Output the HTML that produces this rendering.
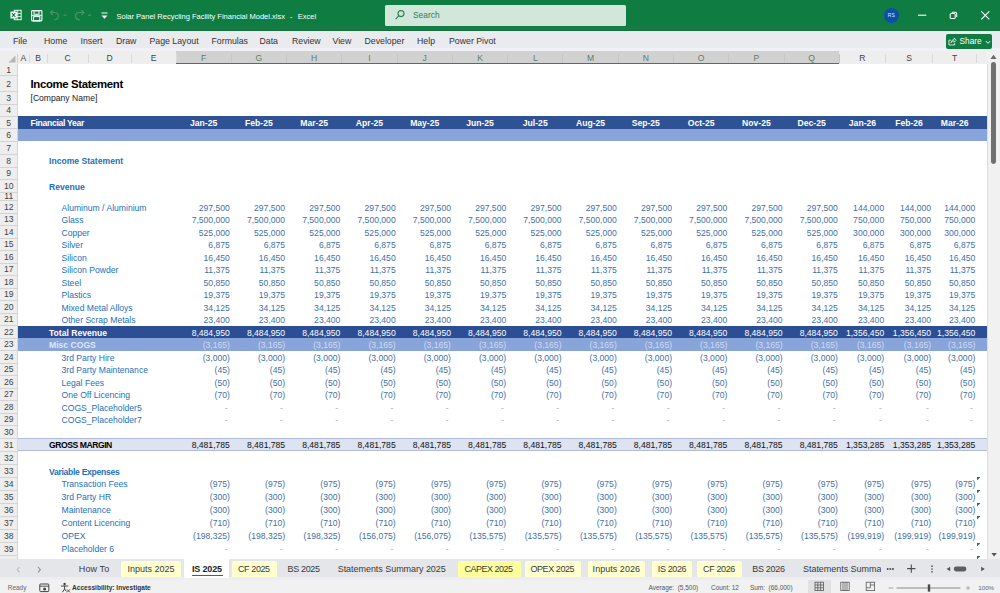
<!DOCTYPE html>
<html lang="en"><head><meta charset="utf-8"><title>Solar Panel Recycling Facility Financial Model.xlsx - Excel</title>
<style>
html,body{margin:0;padding:0;}
body{width:1000px;height:593px;overflow:hidden;position:relative;background:#fff;font-family:"Liberation Sans",sans-serif;}
.a{position:absolute;white-space:nowrap;}
.t{position:absolute;white-space:nowrap;line-height:1;}
#titlebar{left:0;top:0;width:1000px;height:31px;background:linear-gradient(#0f7d42 0,#0f7d42 26px,#187a45 27px,#187a45 29.8px,#0f6a39 31px);}
#ribbon{left:0;top:31px;width:1000px;height:20.2px;background:linear-gradient(#e9ebef 0,#e9ebef 16.6px,#f1f0f5 17.2px,#f1f0f5 20.2px);}
.menu{top:37.3px;font-size:8.75px;color:#333;}
#colhdr{left:0;top:51.1px;width:1000px;height:12.7px;background:#eeeeee;}
.ch{top:53.6px;font-size:8.6px;color:#444;text-align:center;}
.rh{left:0;width:17.5px;font-size:8.6px;color:#444;text-align:center;}
.cell{font-size:8.6px;}
.num{text-align:right;}
.lab{color:#1f6fb8;}
.n{color:#3f70a8;}
.b{font-weight:bold;}
.tab{top:565px;font-size:9.15px;color:#3a3a3a;text-align:center;}
.ytab{top:560.5px;height:17px;border-radius:2px;}
.st{top:584.8px;font-size:6.45px;color:#555;}
</style></head><body>

<div class="a" id="titlebar"></div>
<svg class="a" style="left:9.6px;top:9px" width="12" height="12" viewBox="0 0 14 14">
<rect x="5" y="1.5" width="8" height="11" fill="none" stroke="#fff" stroke-width="1.1"/>
<line x1="9" y1="1.5" x2="9" y2="12.5" stroke="#fff" stroke-width="0.9"/>
<line x1="5" y1="5.2" x2="13" y2="5.2" stroke="#fff" stroke-width="0.9"/>
<line x1="5" y1="8.8" x2="13" y2="8.8" stroke="#fff" stroke-width="0.9"/>
<rect x="0.5" y="3" width="7.5" height="8" fill="#fff"/>
<path d="M2.3 4.8 L6.2 9.3 M6.2 4.8 L2.3 9.3" stroke="#117c42" stroke-width="1.3" fill="none"/>
</svg>
<svg class="a" style="left:31px;top:9.5px" width="12" height="12" viewBox="0 0 12 12">
<rect x="0.6" y="0.6" width="10.3" height="10.3" rx="0.8" fill="none" stroke="#fff" stroke-width="1.1"/>
<rect x="3" y="0.8" width="5" height="3.4" fill="none" stroke="#fff" stroke-width="1"/>
<rect x="2.6" y="6.6" width="6.2" height="4.3" fill="none" stroke="#fff" stroke-width="1"/>
<line x1="0.6" y1="5.4" x2="10.9" y2="5.4" stroke="#fff" stroke-width="0.9"/>
</svg>
<svg class="a" style="left:49px;top:9px" width="54" height="13" viewBox="0 0 54 13">
<g fill="none" stroke="#479669" stroke-width="1.2">
<path d="M1.5 3.5 L5.5 3.5 Q9.5 3.5 9.5 7 Q9.5 10.5 5 11"/>
<path d="M3.8 1.2 L1.3 3.6 L3.8 6"/>
<path d="M14.5 6.2 L17.5 6.2"/>
<path d="M34.5 3.5 L30.5 3.5 Q26.5 3.5 26.5 7 Q26.5 10.5 31 11"/>
<path d="M32.3 1.2 L34.8 3.6 L32.3 6"/>
<path d="M39 6.2 L42 6.2"/>
</g></svg>
<svg class="a" style="left:100px;top:12px" width="9" height="8" viewBox="0 0 9 8">
<line x1="1.5" y1="1" x2="7.5" y2="1" stroke="#fff" stroke-width="1"/>
<path d="M1.5 3.5 L7.5 3.5 L4.5 6.8 Z" fill="#fff"/></svg>
<div class="t" style="left:116.5px;top:12.6px;font-size:7.5px;color:#fff;">Solar Panel Recycling Facility Financial Model.xlsx&nbsp; <span style="margin:0 1px;">-</span> &nbsp;Excel</div>
<div class="a" style="left:385.2px;top:5.2px;width:240.6px;height:20.5px;background:#d1e7da;border-radius:1.5px;"></div>
<svg class="a" style="left:394px;top:9.3px" width="12" height="12" viewBox="0 0 12 12">
<circle cx="7" cy="4.6" r="3" fill="none" stroke="#2f7d55" stroke-width="1.1"/>
<line x1="4.8" y1="6.9" x2="1.6" y2="10.2" stroke="#2f7d55" stroke-width="1.2"/></svg>
<div class="t" style="left:413px;top:10.9px;font-size:8.4px;color:#357a55;">Search</div>
<div class="a" style="left:883.8px;top:7.9px;width:15px;height:15px;border-radius:50%;background:#0b4fa6;"></div>
<div class="t" style="left:883.8px;top:13px;width:15px;text-align:center;font-size:5px;color:#dfe8f5;">RS</div>
<svg class="a" style="left:915px;top:8px" width="80" height="14" viewBox="0 0 80 14">
<line x1="3" y1="7.2" x2="11.3" y2="7.2" stroke="#fff" stroke-width="1.1"/>
<rect x="35.2" y="5.5" width="5" height="5" rx="1.1" fill="none" stroke="#fff" stroke-width="1.05"/>
<path d="M36.7 4.2 L40.3 4.2 Q41.7 4.2 41.7 5.6 L41.7 9.1" fill="none" stroke="#fff" stroke-width="1.05"/>
<path d="M66.3 3.4 L74.3 11.4 M74.3 3.4 L66.3 11.4" stroke="#fff" stroke-width="1.05"/>
</svg>
<div class="a" id="ribbon"></div>
<div class="t menu" style="left:13px;">File</div>
<div class="t menu" style="left:44px;">Home</div>
<div class="t menu" style="left:80.5px;">Insert</div>
<div class="t menu" style="left:116px;">Draw</div>
<div class="t menu" style="left:149.5px;">Page Layout</div>
<div class="t menu" style="left:211.5px;">Formulas</div>
<div class="t menu" style="left:259.5px;">Data</div>
<div class="t menu" style="left:292px;">Review</div>
<div class="t menu" style="left:332.5px;">View</div>
<div class="t menu" style="left:364.5px;">Developer</div>
<div class="t menu" style="left:417px;">Help</div>
<div class="t menu" style="left:449px;">Power Pivot</div>
<div class="a" style="left:946px;top:33.8px;width:46px;height:15px;background:#117c42;border-radius:2px;"></div>
<svg class="a" style="left:948.3px;top:37px" width="8.8" height="8.8" viewBox="0 0 10 10">
<path d="M3.2 3.6 L1 3.6 L1 9 L7.6 9 L7.6 6.8" fill="none" stroke="#fff" stroke-width="0.9"/>
<path d="M3.4 6.6 Q3.8 3 7 2.8 L7 1 L9.4 3.6 L7 6 L7 4.4 Q4.8 4.4 3.4 6.6 Z" fill="none" stroke="#fff" stroke-width="0.8"/></svg>
<div class="t" style="left:959.5px;top:37.2px;font-size:8.3px;color:#fff;">Share</div>
<svg class="a" style="left:984.5px;top:40px" width="6" height="5" viewBox="0 0 6 5"><path d="M0.8 1 L3 3.4 L5.2 1" fill="none" stroke="#fff" stroke-width="0.9"/></svg>
<div class="a" id="colhdr"></div>
<div class="a" style="left:176.0px;top:51.1px;width:663.2999999999998px;height:12.8px;background:#d1d1d1;border-bottom:1.8px solid #2c8653;box-sizing:border-box;"></div>
<svg class="a" style="left:8px;top:54.5px" width="8" height="8" viewBox="0 0 8 8"><path d="M7.5 0.5 L7.5 7.5 L0.5 7.5 Z" fill="#b5b5b5"/></svg>
<div class="t ch" style="left:17.50px;width:11.50px;">A</div>
<div class="a" style="left:28.50px;top:54px;width:1px;height:9px;background:#dadada;"></div>
<div class="t ch" style="left:29.00px;width:18.00px;">B</div>
<div class="a" style="left:46.50px;top:54px;width:1px;height:9px;background:#dadada;"></div>
<div class="t ch" style="left:47.00px;width:41.00px;">C</div>
<div class="a" style="left:87.50px;top:54px;width:1px;height:9px;background:#dadada;"></div>
<div class="t ch" style="left:88.00px;width:43.00px;">D</div>
<div class="a" style="left:130.50px;top:54px;width:1px;height:9px;background:#dadada;"></div>
<div class="t ch" style="left:131.00px;width:45.00px;">E</div>
<div class="a" style="left:175.50px;top:54px;width:1px;height:9px;background:#dadada;"></div>
<div class="t ch" style="left:176.00px;width:55.28px;color:#5f7d6c;">F</div>
<div class="a" style="left:230.78px;top:54px;width:1px;height:9px;background:#c6c6c6;"></div>
<div class="t ch" style="left:231.28px;width:55.28px;color:#5f7d6c;">G</div>
<div class="a" style="left:286.05px;top:54px;width:1px;height:9px;background:#c6c6c6;"></div>
<div class="t ch" style="left:286.55px;width:55.27px;color:#5f7d6c;">H</div>
<div class="a" style="left:341.32px;top:54px;width:1px;height:9px;background:#c6c6c6;"></div>
<div class="t ch" style="left:341.82px;width:55.27px;color:#5f7d6c;">I</div>
<div class="a" style="left:396.60px;top:54px;width:1px;height:9px;background:#c6c6c6;"></div>
<div class="t ch" style="left:397.10px;width:55.27px;color:#5f7d6c;">J</div>
<div class="a" style="left:451.87px;top:54px;width:1px;height:9px;background:#c6c6c6;"></div>
<div class="t ch" style="left:452.37px;width:55.27px;color:#5f7d6c;">K</div>
<div class="a" style="left:507.15px;top:54px;width:1px;height:9px;background:#c6c6c6;"></div>
<div class="t ch" style="left:507.65px;width:55.28px;color:#5f7d6c;">L</div>
<div class="a" style="left:562.42px;top:54px;width:1px;height:9px;background:#c6c6c6;"></div>
<div class="t ch" style="left:562.92px;width:55.27px;color:#5f7d6c;">M</div>
<div class="a" style="left:617.70px;top:54px;width:1px;height:9px;background:#c6c6c6;"></div>
<div class="t ch" style="left:618.20px;width:55.27px;color:#5f7d6c;">N</div>
<div class="a" style="left:672.97px;top:54px;width:1px;height:9px;background:#c6c6c6;"></div>
<div class="t ch" style="left:673.47px;width:55.27px;color:#5f7d6c;">O</div>
<div class="a" style="left:728.25px;top:54px;width:1px;height:9px;background:#c6c6c6;"></div>
<div class="t ch" style="left:728.75px;width:55.27px;color:#5f7d6c;">P</div>
<div class="a" style="left:783.52px;top:54px;width:1px;height:9px;background:#c6c6c6;"></div>
<div class="t ch" style="left:784.02px;width:55.27px;color:#5f7d6c;">Q</div>
<div class="a" style="left:838.80px;top:54px;width:1px;height:9px;background:#c6c6c6;"></div>
<div class="t ch" style="left:839.30px;width:46.30px;">R</div>
<div class="a" style="left:885.10px;top:54px;width:1px;height:9px;background:#dadada;"></div>
<div class="t ch" style="left:885.60px;width:46.90px;">S</div>
<div class="a" style="left:932.00px;top:54px;width:1px;height:9px;background:#dadada;"></div>
<div class="t ch" style="left:932.50px;width:44.20px;">T</div>
<div class="a" style="left:976.20px;top:54px;width:1px;height:9px;background:#dadada;"></div>
<div class="a" style="left:17px;top:54px;width:1px;height:9px;background:#d0d0d0;"></div>
<div class="a" style="left:0;top:63.5px;width:17.5px;height:495.20000000000005px;background:#eeeeee;"></div>
<div class="a" style="left:17px;top:63.5px;width:1px;height:495.20000000000005px;background:#d6d6d6;"></div>
<div class="t rh" style="top:65.85px;">1</div>
<div class="a" style="left:0;top:75.40px;width:17px;height:1px;background:#d4d4d4;"></div>
<div class="t rh" style="top:79.95px;">2</div>
<div class="a" style="left:0;top:91.10px;width:17px;height:1px;background:#d4d4d4;"></div>
<div class="t rh" style="top:94.00px;">3</div>
<div class="a" style="left:0;top:103.50px;width:17px;height:1px;background:#d4d4d4;"></div>
<div class="t rh" style="top:106.30px;">4</div>
<div class="a" style="left:0;top:115.70px;width:17px;height:1px;background:#d4d4d4;"></div>
<div class="t rh" style="top:118.60px;">5</div>
<div class="a" style="left:0;top:128.10px;width:17px;height:1px;background:#d4d4d4;"></div>
<div class="t rh" style="top:131.00px;">6</div>
<div class="a" style="left:0;top:140.50px;width:17px;height:1px;background:#d4d4d4;"></div>
<div class="t rh" style="top:143.95px;">7</div>
<div class="a" style="left:0;top:154.00px;width:17px;height:1px;background:#d4d4d4;"></div>
<div class="t rh" style="top:156.95px;">8</div>
<div class="a" style="left:0;top:166.50px;width:17px;height:1px;background:#d4d4d4;"></div>
<div class="t rh" style="top:169.40px;">9</div>
<div class="a" style="left:0;top:178.90px;width:17px;height:1px;background:#d4d4d4;"></div>
<div class="t rh" style="top:181.90px;">10</div>
<div class="a" style="left:0;top:191.50px;width:17px;height:1px;background:#d4d4d4;"></div>
<div class="t rh" style="top:192.15px;">11</div>
<div class="a" style="left:0;top:200.00px;width:17px;height:1px;background:#d4d4d4;"></div>
<div class="t rh" style="top:202.95px;">12</div>
<div class="a" style="left:0;top:212.50px;width:17px;height:1px;background:#d4d4d4;"></div>
<div class="t rh" style="top:215.45px;">13</div>
<div class="a" style="left:0;top:225.00px;width:17px;height:1px;background:#d4d4d4;"></div>
<div class="t rh" style="top:227.95px;">14</div>
<div class="a" style="left:0;top:237.50px;width:17px;height:1px;background:#d4d4d4;"></div>
<div class="t rh" style="top:240.45px;">15</div>
<div class="a" style="left:0;top:250.00px;width:17px;height:1px;background:#d4d4d4;"></div>
<div class="t rh" style="top:252.95px;">16</div>
<div class="a" style="left:0;top:262.50px;width:17px;height:1px;background:#d4d4d4;"></div>
<div class="t rh" style="top:265.45px;">17</div>
<div class="a" style="left:0;top:275.00px;width:17px;height:1px;background:#d4d4d4;"></div>
<div class="t rh" style="top:277.95px;">18</div>
<div class="a" style="left:0;top:287.50px;width:17px;height:1px;background:#d4d4d4;"></div>
<div class="t rh" style="top:290.45px;">19</div>
<div class="a" style="left:0;top:300.00px;width:17px;height:1px;background:#d4d4d4;"></div>
<div class="t rh" style="top:302.95px;">20</div>
<div class="a" style="left:0;top:312.50px;width:17px;height:1px;background:#d4d4d4;"></div>
<div class="t rh" style="top:315.45px;">21</div>
<div class="a" style="left:0;top:325.00px;width:17px;height:1px;background:#d4d4d4;"></div>
<div class="t rh" style="top:327.95px;">22</div>
<div class="a" style="left:0;top:337.50px;width:17px;height:1px;background:#d4d4d4;"></div>
<div class="t rh" style="top:340.45px;">23</div>
<div class="a" style="left:0;top:350.00px;width:17px;height:1px;background:#d4d4d4;"></div>
<div class="t rh" style="top:352.95px;">24</div>
<div class="a" style="left:0;top:362.50px;width:17px;height:1px;background:#d4d4d4;"></div>
<div class="t rh" style="top:365.45px;">25</div>
<div class="a" style="left:0;top:375.00px;width:17px;height:1px;background:#d4d4d4;"></div>
<div class="t rh" style="top:377.95px;">26</div>
<div class="a" style="left:0;top:387.50px;width:17px;height:1px;background:#d4d4d4;"></div>
<div class="t rh" style="top:390.45px;">27</div>
<div class="a" style="left:0;top:400.00px;width:17px;height:1px;background:#d4d4d4;"></div>
<div class="t rh" style="top:402.95px;">28</div>
<div class="a" style="left:0;top:412.50px;width:17px;height:1px;background:#d4d4d4;"></div>
<div class="t rh" style="top:415.45px;">29</div>
<div class="a" style="left:0;top:425.00px;width:17px;height:1px;background:#d4d4d4;"></div>
<div class="t rh" style="top:427.95px;">30</div>
<div class="a" style="left:0;top:437.50px;width:17px;height:1px;background:#d4d4d4;"></div>
<div class="t rh" style="top:440.80px;">31</div>
<div class="a" style="left:0;top:450.70px;width:17px;height:1px;background:#d4d4d4;"></div>
<div class="t rh" style="top:453.92px;">32</div>
<div class="a" style="left:0;top:463.75px;width:17px;height:1px;background:#d4d4d4;"></div>
<div class="t rh" style="top:466.97px;">33</div>
<div class="a" style="left:0;top:476.80px;width:17px;height:1px;background:#d4d4d4;"></div>
<div class="t rh" style="top:480.02px;">34</div>
<div class="a" style="left:0;top:489.85px;width:17px;height:1px;background:#d4d4d4;"></div>
<div class="t rh" style="top:493.07px;">35</div>
<div class="a" style="left:0;top:502.90px;width:17px;height:1px;background:#d4d4d4;"></div>
<div class="t rh" style="top:506.12px;">36</div>
<div class="a" style="left:0;top:515.95px;width:17px;height:1px;background:#d4d4d4;"></div>
<div class="t rh" style="top:519.18px;">37</div>
<div class="a" style="left:0;top:529.00px;width:17px;height:1px;background:#d4d4d4;"></div>
<div class="t rh" style="top:532.23px;">38</div>
<div class="a" style="left:0;top:542.05px;width:17px;height:1px;background:#d4d4d4;"></div>
<div class="t rh" style="top:545.27px;">39</div>
<div class="a" style="left:0;top:555.10px;width:17px;height:1px;background:#d4d4d4;"></div>
<div class="a" style="left:17.5px;top:116.20px;width:969.5px;height:12.40px;background:#2f5295;"></div>
<div class="a" style="left:17.5px;top:128.60px;width:969.5px;height:12.40px;background:#88a4da;"></div>
<div class="a" style="left:17.5px;top:325.50px;width:969.5px;height:12.50px;background:#2c4e94;"></div>
<div class="a" style="left:17.5px;top:338.00px;width:969.5px;height:12.50px;background:#89a4d9;"></div>
<div class="a" style="left:17.5px;top:438.00px;width:969.5px;height:13.20px;background:#dde3f1;border-top:0.7px solid #b0bcda;border-bottom:0.7px solid #b0bcda;box-sizing:border-box;"></div>
<div class="t b" style="left:30.5px;top:79.10px;font-size:11.4px;letter-spacing:-0.36px;color:#000;">Income Statement</div>
<div class="t cell " style="left:30.50px;top:94.15px;color:#222;">[Company Name]</div>
<div class="t cell b" style="left:30.50px;top:119.10px;color:#fff;letter-spacing:-0.3px;">Financial Year</div>
<div class="t cell b" style="left:176.00px;width:55.28px;text-align:center;top:119.10px;color:#fff;">Jan-25</div>
<div class="t cell b" style="left:231.28px;width:55.28px;text-align:center;top:119.10px;color:#fff;">Feb-25</div>
<div class="t cell b" style="left:286.55px;width:55.27px;text-align:center;top:119.10px;color:#fff;">Mar-25</div>
<div class="t cell b" style="left:341.82px;width:55.27px;text-align:center;top:119.10px;color:#fff;">Apr-25</div>
<div class="t cell b" style="left:397.10px;width:55.27px;text-align:center;top:119.10px;color:#fff;">May-25</div>
<div class="t cell b" style="left:452.37px;width:55.27px;text-align:center;top:119.10px;color:#fff;">Jun-25</div>
<div class="t cell b" style="left:507.65px;width:55.28px;text-align:center;top:119.10px;color:#fff;">Jul-25</div>
<div class="t cell b" style="left:562.92px;width:55.27px;text-align:center;top:119.10px;color:#fff;">Aug-25</div>
<div class="t cell b" style="left:618.20px;width:55.27px;text-align:center;top:119.10px;color:#fff;">Sep-25</div>
<div class="t cell b" style="left:673.47px;width:55.27px;text-align:center;top:119.10px;color:#fff;">Oct-25</div>
<div class="t cell b" style="left:728.75px;width:55.27px;text-align:center;top:119.10px;color:#fff;">Nov-25</div>
<div class="t cell b" style="left:784.02px;width:55.27px;text-align:center;top:119.10px;color:#fff;">Dec-25</div>
<div class="t cell b" style="left:839.30px;width:46.30px;text-align:center;top:119.10px;color:#fff;">Jan-26</div>
<div class="t cell b" style="left:885.60px;width:46.90px;text-align:center;top:119.10px;color:#fff;">Feb-26</div>
<div class="t cell b" style="left:932.50px;width:44.20px;text-align:center;top:119.10px;color:#fff;">Mar-26</div>
<div class="t cell b lab" style="left:49.00px;top:157.40px;">Income Statement</div>
<div class="t cell b lab" style="left:49.00px;top:182.75px;">Revenue</div>
<div class="t cell lab" style="left:61.50px;top:203.75px;">Aluminum / Aluminium</div>
<div class="t cell num n" style="left:176.00px;width:53.88px;top:203.75px;">297,500</div>
<div class="t cell num n" style="left:231.28px;width:53.88px;top:203.75px;">297,500</div>
<div class="t cell num n" style="left:286.55px;width:53.87px;top:203.75px;">297,500</div>
<div class="t cell num n" style="left:341.82px;width:53.87px;top:203.75px;">297,500</div>
<div class="t cell num n" style="left:397.10px;width:53.87px;top:203.75px;">297,500</div>
<div class="t cell num n" style="left:452.37px;width:53.87px;top:203.75px;">297,500</div>
<div class="t cell num n" style="left:507.65px;width:53.88px;top:203.75px;">297,500</div>
<div class="t cell num n" style="left:562.92px;width:53.87px;top:203.75px;">297,500</div>
<div class="t cell num n" style="left:618.20px;width:53.87px;top:203.75px;">297,500</div>
<div class="t cell num n" style="left:673.47px;width:53.87px;top:203.75px;">297,500</div>
<div class="t cell num n" style="left:728.75px;width:53.87px;top:203.75px;">297,500</div>
<div class="t cell num n" style="left:784.02px;width:53.87px;top:203.75px;">297,500</div>
<div class="t cell num n" style="left:839.30px;width:44.90px;top:203.75px;">144,000</div>
<div class="t cell num n" style="left:885.60px;width:45.50px;top:203.75px;">144,000</div>
<div class="t cell num n" style="left:932.50px;width:42.80px;top:203.75px;">144,000</div>
<div class="t cell lab" style="left:61.50px;top:216.25px;">Glass</div>
<div class="t cell num n" style="left:176.00px;width:53.88px;top:216.25px;">7,500,000</div>
<div class="t cell num n" style="left:231.28px;width:53.88px;top:216.25px;">7,500,000</div>
<div class="t cell num n" style="left:286.55px;width:53.87px;top:216.25px;">7,500,000</div>
<div class="t cell num n" style="left:341.82px;width:53.87px;top:216.25px;">7,500,000</div>
<div class="t cell num n" style="left:397.10px;width:53.87px;top:216.25px;">7,500,000</div>
<div class="t cell num n" style="left:452.37px;width:53.87px;top:216.25px;">7,500,000</div>
<div class="t cell num n" style="left:507.65px;width:53.88px;top:216.25px;">7,500,000</div>
<div class="t cell num n" style="left:562.92px;width:53.87px;top:216.25px;">7,500,000</div>
<div class="t cell num n" style="left:618.20px;width:53.87px;top:216.25px;">7,500,000</div>
<div class="t cell num n" style="left:673.47px;width:53.87px;top:216.25px;">7,500,000</div>
<div class="t cell num n" style="left:728.75px;width:53.87px;top:216.25px;">7,500,000</div>
<div class="t cell num n" style="left:784.02px;width:53.87px;top:216.25px;">7,500,000</div>
<div class="t cell num n" style="left:839.30px;width:44.90px;top:216.25px;">750,000</div>
<div class="t cell num n" style="left:885.60px;width:45.50px;top:216.25px;">750,000</div>
<div class="t cell num n" style="left:932.50px;width:42.80px;top:216.25px;">750,000</div>
<div class="t cell lab" style="left:61.50px;top:228.75px;">Copper</div>
<div class="t cell num n" style="left:176.00px;width:53.88px;top:228.75px;">525,000</div>
<div class="t cell num n" style="left:231.28px;width:53.88px;top:228.75px;">525,000</div>
<div class="t cell num n" style="left:286.55px;width:53.87px;top:228.75px;">525,000</div>
<div class="t cell num n" style="left:341.82px;width:53.87px;top:228.75px;">525,000</div>
<div class="t cell num n" style="left:397.10px;width:53.87px;top:228.75px;">525,000</div>
<div class="t cell num n" style="left:452.37px;width:53.87px;top:228.75px;">525,000</div>
<div class="t cell num n" style="left:507.65px;width:53.88px;top:228.75px;">525,000</div>
<div class="t cell num n" style="left:562.92px;width:53.87px;top:228.75px;">525,000</div>
<div class="t cell num n" style="left:618.20px;width:53.87px;top:228.75px;">525,000</div>
<div class="t cell num n" style="left:673.47px;width:53.87px;top:228.75px;">525,000</div>
<div class="t cell num n" style="left:728.75px;width:53.87px;top:228.75px;">525,000</div>
<div class="t cell num n" style="left:784.02px;width:53.87px;top:228.75px;">525,000</div>
<div class="t cell num n" style="left:839.30px;width:44.90px;top:228.75px;">300,000</div>
<div class="t cell num n" style="left:885.60px;width:45.50px;top:228.75px;">300,000</div>
<div class="t cell num n" style="left:932.50px;width:42.80px;top:228.75px;">300,000</div>
<div class="t cell lab" style="left:61.50px;top:241.25px;">Silver</div>
<div class="t cell num n" style="left:176.00px;width:53.88px;top:241.25px;">6,875</div>
<div class="t cell num n" style="left:231.28px;width:53.88px;top:241.25px;">6,875</div>
<div class="t cell num n" style="left:286.55px;width:53.87px;top:241.25px;">6,875</div>
<div class="t cell num n" style="left:341.82px;width:53.87px;top:241.25px;">6,875</div>
<div class="t cell num n" style="left:397.10px;width:53.87px;top:241.25px;">6,875</div>
<div class="t cell num n" style="left:452.37px;width:53.87px;top:241.25px;">6,875</div>
<div class="t cell num n" style="left:507.65px;width:53.88px;top:241.25px;">6,875</div>
<div class="t cell num n" style="left:562.92px;width:53.87px;top:241.25px;">6,875</div>
<div class="t cell num n" style="left:618.20px;width:53.87px;top:241.25px;">6,875</div>
<div class="t cell num n" style="left:673.47px;width:53.87px;top:241.25px;">6,875</div>
<div class="t cell num n" style="left:728.75px;width:53.87px;top:241.25px;">6,875</div>
<div class="t cell num n" style="left:784.02px;width:53.87px;top:241.25px;">6,875</div>
<div class="t cell num n" style="left:839.30px;width:44.90px;top:241.25px;">6,875</div>
<div class="t cell num n" style="left:885.60px;width:45.50px;top:241.25px;">6,875</div>
<div class="t cell num n" style="left:932.50px;width:42.80px;top:241.25px;">6,875</div>
<div class="t cell lab" style="left:61.50px;top:253.75px;">Silicon</div>
<div class="t cell num n" style="left:176.00px;width:53.88px;top:253.75px;">16,450</div>
<div class="t cell num n" style="left:231.28px;width:53.88px;top:253.75px;">16,450</div>
<div class="t cell num n" style="left:286.55px;width:53.87px;top:253.75px;">16,450</div>
<div class="t cell num n" style="left:341.82px;width:53.87px;top:253.75px;">16,450</div>
<div class="t cell num n" style="left:397.10px;width:53.87px;top:253.75px;">16,450</div>
<div class="t cell num n" style="left:452.37px;width:53.87px;top:253.75px;">16,450</div>
<div class="t cell num n" style="left:507.65px;width:53.88px;top:253.75px;">16,450</div>
<div class="t cell num n" style="left:562.92px;width:53.87px;top:253.75px;">16,450</div>
<div class="t cell num n" style="left:618.20px;width:53.87px;top:253.75px;">16,450</div>
<div class="t cell num n" style="left:673.47px;width:53.87px;top:253.75px;">16,450</div>
<div class="t cell num n" style="left:728.75px;width:53.87px;top:253.75px;">16,450</div>
<div class="t cell num n" style="left:784.02px;width:53.87px;top:253.75px;">16,450</div>
<div class="t cell num n" style="left:839.30px;width:44.90px;top:253.75px;">16,450</div>
<div class="t cell num n" style="left:885.60px;width:45.50px;top:253.75px;">16,450</div>
<div class="t cell num n" style="left:932.50px;width:42.80px;top:253.75px;">16,450</div>
<div class="t cell lab" style="left:61.50px;top:266.25px;">Silicon Powder</div>
<div class="t cell num n" style="left:176.00px;width:53.88px;top:266.25px;">11,375</div>
<div class="t cell num n" style="left:231.28px;width:53.88px;top:266.25px;">11,375</div>
<div class="t cell num n" style="left:286.55px;width:53.87px;top:266.25px;">11,375</div>
<div class="t cell num n" style="left:341.82px;width:53.87px;top:266.25px;">11,375</div>
<div class="t cell num n" style="left:397.10px;width:53.87px;top:266.25px;">11,375</div>
<div class="t cell num n" style="left:452.37px;width:53.87px;top:266.25px;">11,375</div>
<div class="t cell num n" style="left:507.65px;width:53.88px;top:266.25px;">11,375</div>
<div class="t cell num n" style="left:562.92px;width:53.87px;top:266.25px;">11,375</div>
<div class="t cell num n" style="left:618.20px;width:53.87px;top:266.25px;">11,375</div>
<div class="t cell num n" style="left:673.47px;width:53.87px;top:266.25px;">11,375</div>
<div class="t cell num n" style="left:728.75px;width:53.87px;top:266.25px;">11,375</div>
<div class="t cell num n" style="left:784.02px;width:53.87px;top:266.25px;">11,375</div>
<div class="t cell num n" style="left:839.30px;width:44.90px;top:266.25px;">11,375</div>
<div class="t cell num n" style="left:885.60px;width:45.50px;top:266.25px;">11,375</div>
<div class="t cell num n" style="left:932.50px;width:42.80px;top:266.25px;">11,375</div>
<div class="t cell lab" style="left:61.50px;top:278.75px;">Steel</div>
<div class="t cell num n" style="left:176.00px;width:53.88px;top:278.75px;">50,850</div>
<div class="t cell num n" style="left:231.28px;width:53.88px;top:278.75px;">50,850</div>
<div class="t cell num n" style="left:286.55px;width:53.87px;top:278.75px;">50,850</div>
<div class="t cell num n" style="left:341.82px;width:53.87px;top:278.75px;">50,850</div>
<div class="t cell num n" style="left:397.10px;width:53.87px;top:278.75px;">50,850</div>
<div class="t cell num n" style="left:452.37px;width:53.87px;top:278.75px;">50,850</div>
<div class="t cell num n" style="left:507.65px;width:53.88px;top:278.75px;">50,850</div>
<div class="t cell num n" style="left:562.92px;width:53.87px;top:278.75px;">50,850</div>
<div class="t cell num n" style="left:618.20px;width:53.87px;top:278.75px;">50,850</div>
<div class="t cell num n" style="left:673.47px;width:53.87px;top:278.75px;">50,850</div>
<div class="t cell num n" style="left:728.75px;width:53.87px;top:278.75px;">50,850</div>
<div class="t cell num n" style="left:784.02px;width:53.87px;top:278.75px;">50,850</div>
<div class="t cell num n" style="left:839.30px;width:44.90px;top:278.75px;">50,850</div>
<div class="t cell num n" style="left:885.60px;width:45.50px;top:278.75px;">50,850</div>
<div class="t cell num n" style="left:932.50px;width:42.80px;top:278.75px;">50,850</div>
<div class="t cell lab" style="left:61.50px;top:291.25px;">Plastics</div>
<div class="t cell num n" style="left:176.00px;width:53.88px;top:291.25px;">19,375</div>
<div class="t cell num n" style="left:231.28px;width:53.88px;top:291.25px;">19,375</div>
<div class="t cell num n" style="left:286.55px;width:53.87px;top:291.25px;">19,375</div>
<div class="t cell num n" style="left:341.82px;width:53.87px;top:291.25px;">19,375</div>
<div class="t cell num n" style="left:397.10px;width:53.87px;top:291.25px;">19,375</div>
<div class="t cell num n" style="left:452.37px;width:53.87px;top:291.25px;">19,375</div>
<div class="t cell num n" style="left:507.65px;width:53.88px;top:291.25px;">19,375</div>
<div class="t cell num n" style="left:562.92px;width:53.87px;top:291.25px;">19,375</div>
<div class="t cell num n" style="left:618.20px;width:53.87px;top:291.25px;">19,375</div>
<div class="t cell num n" style="left:673.47px;width:53.87px;top:291.25px;">19,375</div>
<div class="t cell num n" style="left:728.75px;width:53.87px;top:291.25px;">19,375</div>
<div class="t cell num n" style="left:784.02px;width:53.87px;top:291.25px;">19,375</div>
<div class="t cell num n" style="left:839.30px;width:44.90px;top:291.25px;">19,375</div>
<div class="t cell num n" style="left:885.60px;width:45.50px;top:291.25px;">19,375</div>
<div class="t cell num n" style="left:932.50px;width:42.80px;top:291.25px;">19,375</div>
<div class="t cell lab" style="left:61.50px;top:303.75px;">Mixed Metal Alloys</div>
<div class="t cell num n" style="left:176.00px;width:53.88px;top:303.75px;">34,125</div>
<div class="t cell num n" style="left:231.28px;width:53.88px;top:303.75px;">34,125</div>
<div class="t cell num n" style="left:286.55px;width:53.87px;top:303.75px;">34,125</div>
<div class="t cell num n" style="left:341.82px;width:53.87px;top:303.75px;">34,125</div>
<div class="t cell num n" style="left:397.10px;width:53.87px;top:303.75px;">34,125</div>
<div class="t cell num n" style="left:452.37px;width:53.87px;top:303.75px;">34,125</div>
<div class="t cell num n" style="left:507.65px;width:53.88px;top:303.75px;">34,125</div>
<div class="t cell num n" style="left:562.92px;width:53.87px;top:303.75px;">34,125</div>
<div class="t cell num n" style="left:618.20px;width:53.87px;top:303.75px;">34,125</div>
<div class="t cell num n" style="left:673.47px;width:53.87px;top:303.75px;">34,125</div>
<div class="t cell num n" style="left:728.75px;width:53.87px;top:303.75px;">34,125</div>
<div class="t cell num n" style="left:784.02px;width:53.87px;top:303.75px;">34,125</div>
<div class="t cell num n" style="left:839.30px;width:44.90px;top:303.75px;">34,125</div>
<div class="t cell num n" style="left:885.60px;width:45.50px;top:303.75px;">34,125</div>
<div class="t cell num n" style="left:932.50px;width:42.80px;top:303.75px;">34,125</div>
<div class="t cell lab" style="left:61.50px;top:316.25px;">Other Scrap Metals</div>
<div class="t cell num n" style="left:176.00px;width:53.88px;top:316.25px;">23,400</div>
<div class="t cell num n" style="left:231.28px;width:53.88px;top:316.25px;">23,400</div>
<div class="t cell num n" style="left:286.55px;width:53.87px;top:316.25px;">23,400</div>
<div class="t cell num n" style="left:341.82px;width:53.87px;top:316.25px;">23,400</div>
<div class="t cell num n" style="left:397.10px;width:53.87px;top:316.25px;">23,400</div>
<div class="t cell num n" style="left:452.37px;width:53.87px;top:316.25px;">23,400</div>
<div class="t cell num n" style="left:507.65px;width:53.88px;top:316.25px;">23,400</div>
<div class="t cell num n" style="left:562.92px;width:53.87px;top:316.25px;">23,400</div>
<div class="t cell num n" style="left:618.20px;width:53.87px;top:316.25px;">23,400</div>
<div class="t cell num n" style="left:673.47px;width:53.87px;top:316.25px;">23,400</div>
<div class="t cell num n" style="left:728.75px;width:53.87px;top:316.25px;">23,400</div>
<div class="t cell num n" style="left:784.02px;width:53.87px;top:316.25px;">23,400</div>
<div class="t cell num n" style="left:839.30px;width:44.90px;top:316.25px;">23,400</div>
<div class="t cell num n" style="left:885.60px;width:45.50px;top:316.25px;">23,400</div>
<div class="t cell num n" style="left:932.50px;width:42.80px;top:316.25px;">23,400</div>
<div class="t cell lab" style="left:61.50px;top:353.75px;">3rd Party Hire</div>
<div class="t cell num n" style="left:176.00px;width:53.88px;top:353.75px;">(3,000)</div>
<div class="t cell num n" style="left:231.28px;width:53.88px;top:353.75px;">(3,000)</div>
<div class="t cell num n" style="left:286.55px;width:53.87px;top:353.75px;">(3,000)</div>
<div class="t cell num n" style="left:341.82px;width:53.87px;top:353.75px;">(3,000)</div>
<div class="t cell num n" style="left:397.10px;width:53.87px;top:353.75px;">(3,000)</div>
<div class="t cell num n" style="left:452.37px;width:53.87px;top:353.75px;">(3,000)</div>
<div class="t cell num n" style="left:507.65px;width:53.88px;top:353.75px;">(3,000)</div>
<div class="t cell num n" style="left:562.92px;width:53.87px;top:353.75px;">(3,000)</div>
<div class="t cell num n" style="left:618.20px;width:53.87px;top:353.75px;">(3,000)</div>
<div class="t cell num n" style="left:673.47px;width:53.87px;top:353.75px;">(3,000)</div>
<div class="t cell num n" style="left:728.75px;width:53.87px;top:353.75px;">(3,000)</div>
<div class="t cell num n" style="left:784.02px;width:53.87px;top:353.75px;">(3,000)</div>
<div class="t cell num n" style="left:839.30px;width:44.90px;top:353.75px;">(3,000)</div>
<div class="t cell num n" style="left:885.60px;width:45.50px;top:353.75px;">(3,000)</div>
<div class="t cell num n" style="left:932.50px;width:42.80px;top:353.75px;">(3,000)</div>
<div class="t cell lab" style="left:61.50px;top:366.25px;">3rd Party Maintenance</div>
<div class="t cell num n" style="left:176.00px;width:53.88px;top:366.25px;">(45)</div>
<div class="t cell num n" style="left:231.28px;width:53.88px;top:366.25px;">(45)</div>
<div class="t cell num n" style="left:286.55px;width:53.87px;top:366.25px;">(45)</div>
<div class="t cell num n" style="left:341.82px;width:53.87px;top:366.25px;">(45)</div>
<div class="t cell num n" style="left:397.10px;width:53.87px;top:366.25px;">(45)</div>
<div class="t cell num n" style="left:452.37px;width:53.87px;top:366.25px;">(45)</div>
<div class="t cell num n" style="left:507.65px;width:53.88px;top:366.25px;">(45)</div>
<div class="t cell num n" style="left:562.92px;width:53.87px;top:366.25px;">(45)</div>
<div class="t cell num n" style="left:618.20px;width:53.87px;top:366.25px;">(45)</div>
<div class="t cell num n" style="left:673.47px;width:53.87px;top:366.25px;">(45)</div>
<div class="t cell num n" style="left:728.75px;width:53.87px;top:366.25px;">(45)</div>
<div class="t cell num n" style="left:784.02px;width:53.87px;top:366.25px;">(45)</div>
<div class="t cell num n" style="left:839.30px;width:44.90px;top:366.25px;">(45)</div>
<div class="t cell num n" style="left:885.60px;width:45.50px;top:366.25px;">(45)</div>
<div class="t cell num n" style="left:932.50px;width:42.80px;top:366.25px;">(45)</div>
<div class="t cell lab" style="left:61.50px;top:378.75px;">Legal Fees</div>
<div class="t cell num n" style="left:176.00px;width:53.88px;top:378.75px;">(50)</div>
<div class="t cell num n" style="left:231.28px;width:53.88px;top:378.75px;">(50)</div>
<div class="t cell num n" style="left:286.55px;width:53.87px;top:378.75px;">(50)</div>
<div class="t cell num n" style="left:341.82px;width:53.87px;top:378.75px;">(50)</div>
<div class="t cell num n" style="left:397.10px;width:53.87px;top:378.75px;">(50)</div>
<div class="t cell num n" style="left:452.37px;width:53.87px;top:378.75px;">(50)</div>
<div class="t cell num n" style="left:507.65px;width:53.88px;top:378.75px;">(50)</div>
<div class="t cell num n" style="left:562.92px;width:53.87px;top:378.75px;">(50)</div>
<div class="t cell num n" style="left:618.20px;width:53.87px;top:378.75px;">(50)</div>
<div class="t cell num n" style="left:673.47px;width:53.87px;top:378.75px;">(50)</div>
<div class="t cell num n" style="left:728.75px;width:53.87px;top:378.75px;">(50)</div>
<div class="t cell num n" style="left:784.02px;width:53.87px;top:378.75px;">(50)</div>
<div class="t cell num n" style="left:839.30px;width:44.90px;top:378.75px;">(50)</div>
<div class="t cell num n" style="left:885.60px;width:45.50px;top:378.75px;">(50)</div>
<div class="t cell num n" style="left:932.50px;width:42.80px;top:378.75px;">(50)</div>
<div class="t cell lab" style="left:61.50px;top:391.25px;">One Off Licencing</div>
<div class="t cell num n" style="left:176.00px;width:53.88px;top:391.25px;">(70)</div>
<div class="t cell num n" style="left:231.28px;width:53.88px;top:391.25px;">(70)</div>
<div class="t cell num n" style="left:286.55px;width:53.87px;top:391.25px;">(70)</div>
<div class="t cell num n" style="left:341.82px;width:53.87px;top:391.25px;">(70)</div>
<div class="t cell num n" style="left:397.10px;width:53.87px;top:391.25px;">(70)</div>
<div class="t cell num n" style="left:452.37px;width:53.87px;top:391.25px;">(70)</div>
<div class="t cell num n" style="left:507.65px;width:53.88px;top:391.25px;">(70)</div>
<div class="t cell num n" style="left:562.92px;width:53.87px;top:391.25px;">(70)</div>
<div class="t cell num n" style="left:618.20px;width:53.87px;top:391.25px;">(70)</div>
<div class="t cell num n" style="left:673.47px;width:53.87px;top:391.25px;">(70)</div>
<div class="t cell num n" style="left:728.75px;width:53.87px;top:391.25px;">(70)</div>
<div class="t cell num n" style="left:784.02px;width:53.87px;top:391.25px;">(70)</div>
<div class="t cell num n" style="left:839.30px;width:44.90px;top:391.25px;">(70)</div>
<div class="t cell num n" style="left:885.60px;width:45.50px;top:391.25px;">(70)</div>
<div class="t cell num n" style="left:932.50px;width:42.80px;top:391.25px;">(70)</div>
<div class="t cell lab" style="left:61.50px;top:403.75px;">COGS_Placeholder5</div>
<div class="t cell" style="left:224.68px;top:403.75px;color:#b0b0b0;">-</div>
<div class="t cell" style="left:279.95px;top:403.75px;color:#b0b0b0;">-</div>
<div class="t cell" style="left:335.22px;top:403.75px;color:#b0b0b0;">-</div>
<div class="t cell" style="left:390.50px;top:403.75px;color:#b0b0b0;">-</div>
<div class="t cell" style="left:445.77px;top:403.75px;color:#b0b0b0;">-</div>
<div class="t cell" style="left:501.05px;top:403.75px;color:#b0b0b0;">-</div>
<div class="t cell" style="left:556.32px;top:403.75px;color:#b0b0b0;">-</div>
<div class="t cell" style="left:611.60px;top:403.75px;color:#b0b0b0;">-</div>
<div class="t cell" style="left:666.87px;top:403.75px;color:#b0b0b0;">-</div>
<div class="t cell" style="left:722.15px;top:403.75px;color:#b0b0b0;">-</div>
<div class="t cell" style="left:777.42px;top:403.75px;color:#b0b0b0;">-</div>
<div class="t cell" style="left:832.70px;top:403.75px;color:#b0b0b0;">-</div>
<div class="t cell" style="left:879.00px;top:403.75px;color:#b0b0b0;">-</div>
<div class="t cell" style="left:925.90px;top:403.75px;color:#b0b0b0;">-</div>
<div class="t cell" style="left:970.10px;top:403.75px;color:#b0b0b0;">-</div>
<div class="t cell lab" style="left:61.50px;top:416.25px;">COGS_Placeholder7</div>
<div class="t cell" style="left:224.68px;top:416.25px;color:#b0b0b0;">-</div>
<div class="t cell" style="left:279.95px;top:416.25px;color:#b0b0b0;">-</div>
<div class="t cell" style="left:335.22px;top:416.25px;color:#b0b0b0;">-</div>
<div class="t cell" style="left:390.50px;top:416.25px;color:#b0b0b0;">-</div>
<div class="t cell" style="left:445.77px;top:416.25px;color:#b0b0b0;">-</div>
<div class="t cell" style="left:501.05px;top:416.25px;color:#b0b0b0;">-</div>
<div class="t cell" style="left:556.32px;top:416.25px;color:#b0b0b0;">-</div>
<div class="t cell" style="left:611.60px;top:416.25px;color:#b0b0b0;">-</div>
<div class="t cell" style="left:666.87px;top:416.25px;color:#b0b0b0;">-</div>
<div class="t cell" style="left:722.15px;top:416.25px;color:#b0b0b0;">-</div>
<div class="t cell" style="left:777.42px;top:416.25px;color:#b0b0b0;">-</div>
<div class="t cell" style="left:832.70px;top:416.25px;color:#b0b0b0;">-</div>
<div class="t cell" style="left:879.00px;top:416.25px;color:#b0b0b0;">-</div>
<div class="t cell" style="left:925.90px;top:416.25px;color:#b0b0b0;">-</div>
<div class="t cell" style="left:970.10px;top:416.25px;color:#b0b0b0;">-</div>
<div class="t cell lab" style="left:61.50px;top:479.85px;">Transaction Fees</div>
<div class="t cell num n" style="left:176.00px;width:53.88px;top:479.85px;">(975)</div>
<div class="t cell num n" style="left:231.28px;width:53.88px;top:479.85px;">(975)</div>
<div class="t cell num n" style="left:286.55px;width:53.87px;top:479.85px;">(975)</div>
<div class="t cell num n" style="left:341.82px;width:53.87px;top:479.85px;">(975)</div>
<div class="t cell num n" style="left:397.10px;width:53.87px;top:479.85px;">(975)</div>
<div class="t cell num n" style="left:452.37px;width:53.87px;top:479.85px;">(975)</div>
<div class="t cell num n" style="left:507.65px;width:53.88px;top:479.85px;">(975)</div>
<div class="t cell num n" style="left:562.92px;width:53.87px;top:479.85px;">(975)</div>
<div class="t cell num n" style="left:618.20px;width:53.87px;top:479.85px;">(975)</div>
<div class="t cell num n" style="left:673.47px;width:53.87px;top:479.85px;">(975)</div>
<div class="t cell num n" style="left:728.75px;width:53.87px;top:479.85px;">(975)</div>
<div class="t cell num n" style="left:784.02px;width:53.87px;top:479.85px;">(975)</div>
<div class="t cell num n" style="left:839.30px;width:44.90px;top:479.85px;">(975)</div>
<div class="t cell num n" style="left:885.60px;width:45.50px;top:479.85px;">(975)</div>
<div class="t cell num n" style="left:932.50px;width:42.80px;top:479.85px;">(975)</div>
<div class="t cell lab" style="left:61.50px;top:492.90px;">3rd Party HR</div>
<div class="t cell num n" style="left:176.00px;width:53.88px;top:492.90px;">(300)</div>
<div class="t cell num n" style="left:231.28px;width:53.88px;top:492.90px;">(300)</div>
<div class="t cell num n" style="left:286.55px;width:53.87px;top:492.90px;">(300)</div>
<div class="t cell num n" style="left:341.82px;width:53.87px;top:492.90px;">(300)</div>
<div class="t cell num n" style="left:397.10px;width:53.87px;top:492.90px;">(300)</div>
<div class="t cell num n" style="left:452.37px;width:53.87px;top:492.90px;">(300)</div>
<div class="t cell num n" style="left:507.65px;width:53.88px;top:492.90px;">(300)</div>
<div class="t cell num n" style="left:562.92px;width:53.87px;top:492.90px;">(300)</div>
<div class="t cell num n" style="left:618.20px;width:53.87px;top:492.90px;">(300)</div>
<div class="t cell num n" style="left:673.47px;width:53.87px;top:492.90px;">(300)</div>
<div class="t cell num n" style="left:728.75px;width:53.87px;top:492.90px;">(300)</div>
<div class="t cell num n" style="left:784.02px;width:53.87px;top:492.90px;">(300)</div>
<div class="t cell num n" style="left:839.30px;width:44.90px;top:492.90px;">(300)</div>
<div class="t cell num n" style="left:885.60px;width:45.50px;top:492.90px;">(300)</div>
<div class="t cell num n" style="left:932.50px;width:42.80px;top:492.90px;">(300)</div>
<div class="t cell lab" style="left:61.50px;top:505.95px;">Maintenance</div>
<div class="t cell num n" style="left:176.00px;width:53.88px;top:505.95px;">(300)</div>
<div class="t cell num n" style="left:231.28px;width:53.88px;top:505.95px;">(300)</div>
<div class="t cell num n" style="left:286.55px;width:53.87px;top:505.95px;">(300)</div>
<div class="t cell num n" style="left:341.82px;width:53.87px;top:505.95px;">(300)</div>
<div class="t cell num n" style="left:397.10px;width:53.87px;top:505.95px;">(300)</div>
<div class="t cell num n" style="left:452.37px;width:53.87px;top:505.95px;">(300)</div>
<div class="t cell num n" style="left:507.65px;width:53.88px;top:505.95px;">(300)</div>
<div class="t cell num n" style="left:562.92px;width:53.87px;top:505.95px;">(300)</div>
<div class="t cell num n" style="left:618.20px;width:53.87px;top:505.95px;">(300)</div>
<div class="t cell num n" style="left:673.47px;width:53.87px;top:505.95px;">(300)</div>
<div class="t cell num n" style="left:728.75px;width:53.87px;top:505.95px;">(300)</div>
<div class="t cell num n" style="left:784.02px;width:53.87px;top:505.95px;">(300)</div>
<div class="t cell num n" style="left:839.30px;width:44.90px;top:505.95px;">(300)</div>
<div class="t cell num n" style="left:885.60px;width:45.50px;top:505.95px;">(300)</div>
<div class="t cell num n" style="left:932.50px;width:42.80px;top:505.95px;">(300)</div>
<div class="t cell lab" style="left:61.50px;top:519.00px;">Content Licencing</div>
<div class="t cell num n" style="left:176.00px;width:53.88px;top:519.00px;">(710)</div>
<div class="t cell num n" style="left:231.28px;width:53.88px;top:519.00px;">(710)</div>
<div class="t cell num n" style="left:286.55px;width:53.87px;top:519.00px;">(710)</div>
<div class="t cell num n" style="left:341.82px;width:53.87px;top:519.00px;">(710)</div>
<div class="t cell num n" style="left:397.10px;width:53.87px;top:519.00px;">(710)</div>
<div class="t cell num n" style="left:452.37px;width:53.87px;top:519.00px;">(710)</div>
<div class="t cell num n" style="left:507.65px;width:53.88px;top:519.00px;">(710)</div>
<div class="t cell num n" style="left:562.92px;width:53.87px;top:519.00px;">(710)</div>
<div class="t cell num n" style="left:618.20px;width:53.87px;top:519.00px;">(710)</div>
<div class="t cell num n" style="left:673.47px;width:53.87px;top:519.00px;">(710)</div>
<div class="t cell num n" style="left:728.75px;width:53.87px;top:519.00px;">(710)</div>
<div class="t cell num n" style="left:784.02px;width:53.87px;top:519.00px;">(710)</div>
<div class="t cell num n" style="left:839.30px;width:44.90px;top:519.00px;">(710)</div>
<div class="t cell num n" style="left:885.60px;width:45.50px;top:519.00px;">(710)</div>
<div class="t cell num n" style="left:932.50px;width:42.80px;top:519.00px;">(710)</div>
<div class="t cell lab" style="left:61.50px;top:532.05px;">OPEX</div>
<div class="t cell num n" style="left:176.00px;width:53.88px;top:532.05px;">(198,325)</div>
<div class="t cell num n" style="left:231.28px;width:53.88px;top:532.05px;">(198,325)</div>
<div class="t cell num n" style="left:286.55px;width:53.87px;top:532.05px;">(198,325)</div>
<div class="t cell num n" style="left:341.82px;width:53.87px;top:532.05px;">(156,075)</div>
<div class="t cell num n" style="left:397.10px;width:53.87px;top:532.05px;">(156,075)</div>
<div class="t cell num n" style="left:452.37px;width:53.87px;top:532.05px;">(135,575)</div>
<div class="t cell num n" style="left:507.65px;width:53.88px;top:532.05px;">(135,575)</div>
<div class="t cell num n" style="left:562.92px;width:53.87px;top:532.05px;">(135,575)</div>
<div class="t cell num n" style="left:618.20px;width:53.87px;top:532.05px;">(135,575)</div>
<div class="t cell num n" style="left:673.47px;width:53.87px;top:532.05px;">(135,575)</div>
<div class="t cell num n" style="left:728.75px;width:53.87px;top:532.05px;">(135,575)</div>
<div class="t cell num n" style="left:784.02px;width:53.87px;top:532.05px;">(135,575)</div>
<div class="t cell num n" style="left:839.30px;width:44.90px;top:532.05px;">(199,919)</div>
<div class="t cell num n" style="left:885.60px;width:45.50px;top:532.05px;">(199,919)</div>
<div class="t cell num n" style="left:932.50px;width:42.80px;top:532.05px;">(199,919)</div>
<div class="t cell lab" style="left:61.50px;top:545.10px;">Placeholder 6</div>
<div class="t cell" style="left:224.68px;top:545.10px;color:#b0b0b0;">-</div>
<div class="t cell" style="left:279.95px;top:545.10px;color:#b0b0b0;">-</div>
<div class="t cell" style="left:335.22px;top:545.10px;color:#b0b0b0;">-</div>
<div class="t cell" style="left:390.50px;top:545.10px;color:#b0b0b0;">-</div>
<div class="t cell" style="left:445.77px;top:545.10px;color:#b0b0b0;">-</div>
<div class="t cell" style="left:501.05px;top:545.10px;color:#b0b0b0;">-</div>
<div class="t cell" style="left:556.32px;top:545.10px;color:#b0b0b0;">-</div>
<div class="t cell" style="left:611.60px;top:545.10px;color:#b0b0b0;">-</div>
<div class="t cell" style="left:666.87px;top:545.10px;color:#b0b0b0;">-</div>
<div class="t cell" style="left:722.15px;top:545.10px;color:#b0b0b0;">-</div>
<div class="t cell" style="left:777.42px;top:545.10px;color:#b0b0b0;">-</div>
<div class="t cell" style="left:832.70px;top:545.10px;color:#b0b0b0;">-</div>
<div class="t cell" style="left:879.00px;top:545.10px;color:#b0b0b0;">-</div>
<div class="t cell" style="left:925.90px;top:545.10px;color:#b0b0b0;">-</div>
<div class="t cell" style="left:970.10px;top:545.10px;color:#b0b0b0;">-</div>
<div class="t cell b" style="left:49.00px;top:328.75px;color:#fff;">Total Revenue</div>
<div class="t cell num " style="left:176.00px;width:53.88px;top:328.75px;color:#fff;">8,484,950</div>
<div class="t cell num " style="left:231.28px;width:53.88px;top:328.75px;color:#fff;">8,484,950</div>
<div class="t cell num " style="left:286.55px;width:53.87px;top:328.75px;color:#fff;">8,484,950</div>
<div class="t cell num " style="left:341.82px;width:53.87px;top:328.75px;color:#fff;">8,484,950</div>
<div class="t cell num " style="left:397.10px;width:53.87px;top:328.75px;color:#fff;">8,484,950</div>
<div class="t cell num " style="left:452.37px;width:53.87px;top:328.75px;color:#fff;">8,484,950</div>
<div class="t cell num " style="left:507.65px;width:53.88px;top:328.75px;color:#fff;">8,484,950</div>
<div class="t cell num " style="left:562.92px;width:53.87px;top:328.75px;color:#fff;">8,484,950</div>
<div class="t cell num " style="left:618.20px;width:53.87px;top:328.75px;color:#fff;">8,484,950</div>
<div class="t cell num " style="left:673.47px;width:53.87px;top:328.75px;color:#fff;">8,484,950</div>
<div class="t cell num " style="left:728.75px;width:53.87px;top:328.75px;color:#fff;">8,484,950</div>
<div class="t cell num " style="left:784.02px;width:53.87px;top:328.75px;color:#fff;">8,484,950</div>
<div class="t cell num " style="left:839.30px;width:44.90px;top:328.75px;color:#fff;">1,356,450</div>
<div class="t cell num " style="left:885.60px;width:45.50px;top:328.75px;color:#fff;">1,356,450</div>
<div class="t cell num " style="left:932.50px;width:42.80px;top:328.75px;color:#fff;">1,356,450</div>
<div class="t cell b" style="left:49.00px;top:341.25px;color:#dfe7f6;">Misc COGS</div>
<div class="t cell num " style="left:176.00px;width:53.88px;top:341.25px;color:#cfdaf0;">(3,165)</div>
<div class="t cell num " style="left:231.28px;width:53.88px;top:341.25px;color:#cfdaf0;">(3,165)</div>
<div class="t cell num " style="left:286.55px;width:53.87px;top:341.25px;color:#cfdaf0;">(3,165)</div>
<div class="t cell num " style="left:341.82px;width:53.87px;top:341.25px;color:#cfdaf0;">(3,165)</div>
<div class="t cell num " style="left:397.10px;width:53.87px;top:341.25px;color:#cfdaf0;">(3,165)</div>
<div class="t cell num " style="left:452.37px;width:53.87px;top:341.25px;color:#cfdaf0;">(3,165)</div>
<div class="t cell num " style="left:507.65px;width:53.88px;top:341.25px;color:#cfdaf0;">(3,165)</div>
<div class="t cell num " style="left:562.92px;width:53.87px;top:341.25px;color:#cfdaf0;">(3,165)</div>
<div class="t cell num " style="left:618.20px;width:53.87px;top:341.25px;color:#cfdaf0;">(3,165)</div>
<div class="t cell num " style="left:673.47px;width:53.87px;top:341.25px;color:#cfdaf0;">(3,165)</div>
<div class="t cell num " style="left:728.75px;width:53.87px;top:341.25px;color:#cfdaf0;">(3,165)</div>
<div class="t cell num " style="left:784.02px;width:53.87px;top:341.25px;color:#cfdaf0;">(3,165)</div>
<div class="t cell num " style="left:839.30px;width:44.90px;top:341.25px;color:#cfdaf0;">(3,165)</div>
<div class="t cell num " style="left:885.60px;width:45.50px;top:341.25px;color:#cfdaf0;">(3,165)</div>
<div class="t cell num " style="left:932.50px;width:42.80px;top:341.25px;color:#cfdaf0;">(3,165)</div>
<div class="t cell b" style="left:49.00px;top:441.10px;color:#000;letter-spacing:-0.45px;">GROSS MARGIN</div>
<div class="t cell num " style="left:176.00px;width:53.88px;top:441.10px;color:#111;">8,481,785</div>
<div class="t cell num " style="left:231.28px;width:53.88px;top:441.10px;color:#111;">8,481,785</div>
<div class="t cell num " style="left:286.55px;width:53.87px;top:441.10px;color:#111;">8,481,785</div>
<div class="t cell num " style="left:341.82px;width:53.87px;top:441.10px;color:#111;">8,481,785</div>
<div class="t cell num " style="left:397.10px;width:53.87px;top:441.10px;color:#111;">8,481,785</div>
<div class="t cell num " style="left:452.37px;width:53.87px;top:441.10px;color:#111;">8,481,785</div>
<div class="t cell num " style="left:507.65px;width:53.88px;top:441.10px;color:#111;">8,481,785</div>
<div class="t cell num " style="left:562.92px;width:53.87px;top:441.10px;color:#111;">8,481,785</div>
<div class="t cell num " style="left:618.20px;width:53.87px;top:441.10px;color:#111;">8,481,785</div>
<div class="t cell num " style="left:673.47px;width:53.87px;top:441.10px;color:#111;">8,481,785</div>
<div class="t cell num " style="left:728.75px;width:53.87px;top:441.10px;color:#111;">8,481,785</div>
<div class="t cell num " style="left:784.02px;width:53.87px;top:441.10px;color:#111;">8,481,785</div>
<div class="t cell num " style="left:839.30px;width:44.90px;top:441.10px;color:#111;">1,353,285</div>
<div class="t cell num " style="left:885.60px;width:45.50px;top:441.10px;color:#111;">1,353,285</div>
<div class="t cell num " style="left:932.50px;width:42.80px;top:441.10px;color:#111;">1,353,285</div>
<div class="t cell b lab" style="left:49.00px;top:467.80px;letter-spacing:-0.3px;">Variable Expenses</div>
<svg class="a" style="left:976.90px;top:477.30px" width="3.4" height="3.4" viewBox="0 0 4 4"><path d="M0 0 L4 0 L0 4 Z" fill="#1e7b45"/></svg>
<svg class="a" style="left:976.90px;top:490.35px" width="3.4" height="3.4" viewBox="0 0 4 4"><path d="M0 0 L4 0 L0 4 Z" fill="#1e7b45"/></svg>
<svg class="a" style="left:976.90px;top:503.40px" width="3.4" height="3.4" viewBox="0 0 4 4"><path d="M0 0 L4 0 L0 4 Z" fill="#1e7b45"/></svg>
<svg class="a" style="left:976.90px;top:516.45px" width="3.4" height="3.4" viewBox="0 0 4 4"><path d="M0 0 L4 0 L0 4 Z" fill="#1e7b45"/></svg>
<svg class="a" style="left:976.90px;top:542.55px" width="3.4" height="3.4" viewBox="0 0 4 4"><path d="M0 0 L4 0 L0 4 Z" fill="#1e7b45"/></svg>
<svg class="a" style="left:976.90px;top:555.60px" width="3.4" height="3.4" viewBox="0 0 4 4"><path d="M0 0 L4 0 L0 4 Z" fill="#1e7b45"/></svg>
<div class="a" style="left:987px;top:51.1px;width:13px;height:507.6px;background:#f1f1f1;"></div>
<div class="a" style="left:987px;top:63.5px;width:1px;height:495.20000000000005px;background:#dcdcdc;"></div>
<svg class="a" style="left:990px;top:53.5px" width="7" height="6" viewBox="0 0 7 6"><path d="M3.5 0.8 L6.6 5 L0.4 5 Z" fill="#6b6b6b"/></svg>
<div class="a" style="left:991.4px;top:62px;width:4.8px;height:102px;background:#707070;border-radius:2.4px;"></div>
<svg class="a" style="left:990.8px;top:552.3px" width="6.2" height="5.3" viewBox="0 0 7 6"><path d="M3.5 5.2 L6.6 1 L0.4 1 Z" fill="#555"/></svg>
<div class="a" style="left:0;top:558.7px;width:1000px;height:21.299999999999955px;background:#e4e6e9;"></div>
<svg class="a" style="left:14px;top:565px" width="30" height="9" viewBox="0 0 30 9">
<path d="M5.6 2 L3.2 4.7 L5.6 7.4" fill="none" stroke="#bdbdbd" stroke-width="1.1"/>
<path d="M24 2 L26.4 4.7 L24 7.4" fill="none" stroke="#8f8f8f" stroke-width="1.1"/></svg>
<div class="t tab" style="left:78.75px;font-size:9.0px;letter-spacing:0.130px;text-align:left;">How To</div>
<div class="a ytab" style="left:121px;width:60px;background:#ffffcf;"></div>
<div class="t tab" style="left:127.5px;font-size:9.0px;letter-spacing:-0.004px;text-align:left;">Inputs 2025</div>
<div class="a" style="left:184px;top:558.7px;width:45px;height:19.5px;background:#fff;border-radius:0 0 3px 3px;"></div>
<div class="t tab b" style="left:192px;color:#222;top:564.8px;font-size:9.0px;letter-spacing:-0.171px;text-align:left;">IS 2025</div>
<div class="a" style="left:191.5px;top:575px;width:31px;height:1.3px;background:#1e7b45;"></div>
<div class="a ytab" style="left:231.5px;width:45.5px;background:#ffffcf;"></div>
<div class="t tab" style="left:238px;font-size:9.0px;letter-spacing:-0.403px;text-align:left;">CF 2025</div>
<div class="t tab" style="left:287.5px;font-size:9.0px;letter-spacing:-0.338px;text-align:left;">BS 2025</div>
<div class="t tab" style="left:337.7px;font-size:9.0px;letter-spacing:-0.043px;text-align:left;">Statements Summary 2025</div>
<div class="a ytab" style="left:457.5px;width:63.0px;background:#ffff9e;"></div>
<div class="t tab" style="left:464.5px;font-size:9.0px;letter-spacing:-0.504px;text-align:left;">CAPEX 2025</div>
<div class="a ytab" style="left:524.5px;width:56.0px;background:#ffffcf;"></div>
<div class="t tab" style="left:530.4px;font-size:9.0px;letter-spacing:-0.417px;text-align:left;">OPEX 2025</div>
<div class="a ytab" style="left:587.5px;width:57.5px;background:#ffffcf;"></div>
<div class="t tab" style="left:592.6px;font-size:9.0px;letter-spacing:0.036px;text-align:left;">Inputs 2026</div>
<div class="a ytab" style="left:651.5px;width:40.0px;background:#ffffcf;"></div>
<div class="t tab" style="left:657.8px;font-size:9.0px;letter-spacing:-0.371px;text-align:left;">IS 2026</div>
<div class="a ytab" style="left:696.5px;width:45.0px;background:#ffffcf;"></div>
<div class="t tab" style="left:703px;font-size:9.0px;letter-spacing:-0.370px;text-align:left;">CF 2026</div>
<div class="t tab" style="left:752.2px;font-size:9.0px;letter-spacing:-0.305px;text-align:left;">BS 2026</div>
<div class="t tab" style="left:803px;width:77.5px;text-align:left;overflow:hidden;font-size:9.0px;letter-spacing:-0.043px;">Statements Summary 2026</div>
<div class="a" style="left:0;top:577.4px;width:1000px;height:2.6px;background:#eeeef0;"></div>
<div class="a" style="left:184px;top:577px;width:45px;height:1.2px;background:#fff;border-radius:0 0 3px 3px;"></div>
<svg class="a" style="left:886px;top:561.3px" width="102" height="16" viewBox="0 0 102 16">
<circle cx="1.7" cy="8" r="0.95" fill="#444"/><circle cx="4.3" cy="8" r="0.95" fill="#444"/><circle cx="6.9" cy="8" r="0.95" fill="#444"/>
<path d="M21.2 7.6 L29.4 7.6 M25.3 3.5 L25.3 11.7" stroke="#4a4a4a" stroke-width="1.1"/>
<circle cx="46" cy="5.2" r="0.85" fill="#555"/><circle cx="46" cy="8" r="0.85" fill="#555"/><circle cx="46" cy="10.8" r="0.85" fill="#555"/>
<path d="M64.2 5.7 L64.2 10.3 L60.6 8 Z" fill="#555"/>
<rect x="67.8" y="5.5" width="12.6" height="4.9" rx="2.4" fill="#5e5e5e"/>
<path d="M95.2 5.7 L95.2 10.3 L98.8 8 Z" fill="#555"/>
</svg>
<div class="a" style="left:0;top:580px;width:1000px;height:13px;background:#f1f1f1;"></div>
<div class="t st" style="left:7.8px;font-size:6.45px;color:#666;">Ready</div>
<svg class="a" style="left:39px;top:582.8px" width="11" height="10" viewBox="0 0 11 10">
<rect x="0.8" y="1" width="9" height="7.6" rx="0.8" fill="none" stroke="#444" stroke-width="1"/>
<line x1="0.8" y1="3.2" x2="9.8" y2="3.2" stroke="#444" stroke-width="0.9"/>
<circle cx="5.6" cy="6" r="1.5" fill="#444"/></svg>
<svg class="a" style="left:60px;top:582px" width="11" height="11" viewBox="0 0 11 11">
<circle cx="4.6" cy="2" r="1.2" fill="#444"/>
<path d="M1 4 L8.2 4 M4.6 4 L4.6 7 M4.6 7 L2.4 10.2 M4.6 7 L6.4 9.4" stroke="#444" stroke-width="1" fill="none"/>
<path d="M7 7.4 L10 10.4 M10 7.4 L7 10.4" stroke="#444" stroke-width="0.9"/></svg>
<div class="t st b" style="left:72px;color:#333;font-size:6.6px;">Accessibility: Investigate</div>
<div class="t st" style="left:648.5px;">Average:&nbsp; (5,500)</div>
<div class="t st" style="left:711px;">Count: 12</div>
<div class="t st" style="left:750px;">Sum:&nbsp; (66,000)</div>
<div class="a" style="left:808px;top:580px;width:23px;height:13px;background:#e1e1e1;"></div>
<svg class="a" style="left:812px;top:581px" width="70" height="11" viewBox="0 0 70 11">
<g fill="none" stroke="#5a5a5a" stroke-width="0.8">
<rect x="3" y="1.2" width="8.4" height="8.4"/><path d="M3 4 L11.4 4 M3 6.8 L11.4 6.8 M5.8 1.2 L5.8 9.6 M8.6 1.2 L8.6 9.6"/>
<rect x="28.8" y="1.2" width="8.4" height="8.4"/><path d="M31 1.2 L31 9.6 M33 1.2 L33 9.6 M35 1.2 L35 9.6"/>
<rect x="54.2" y="1.2" width="8.4" height="8.4"/><path d="M54.2 6.8 L58.4 6.8 L58.4 1.2 M58.4 4 L62.6 4"/>
</g></svg>
<svg class="a" style="left:886px;top:582.5px" width="90" height="10" viewBox="0 0 90 10">
<path d="M2.6 5 L7.2 5" stroke="#9a9a9a" stroke-width="0.9"/>
<path d="M10.5 5 L74.5 5" stroke="#787878" stroke-width="0.85"/>
<rect x="41.8" y="1.4" width="2.4" height="7.2" fill="#4a4a4a"/>
<path d="M80 5 L84 5 M82 3 L82 7" stroke="#9a9a9a" stroke-width="0.8"/></svg>
<div class="t st" style="left:978.3px;font-size:6.2px;color:#666;">100%</div>
</body></html>
